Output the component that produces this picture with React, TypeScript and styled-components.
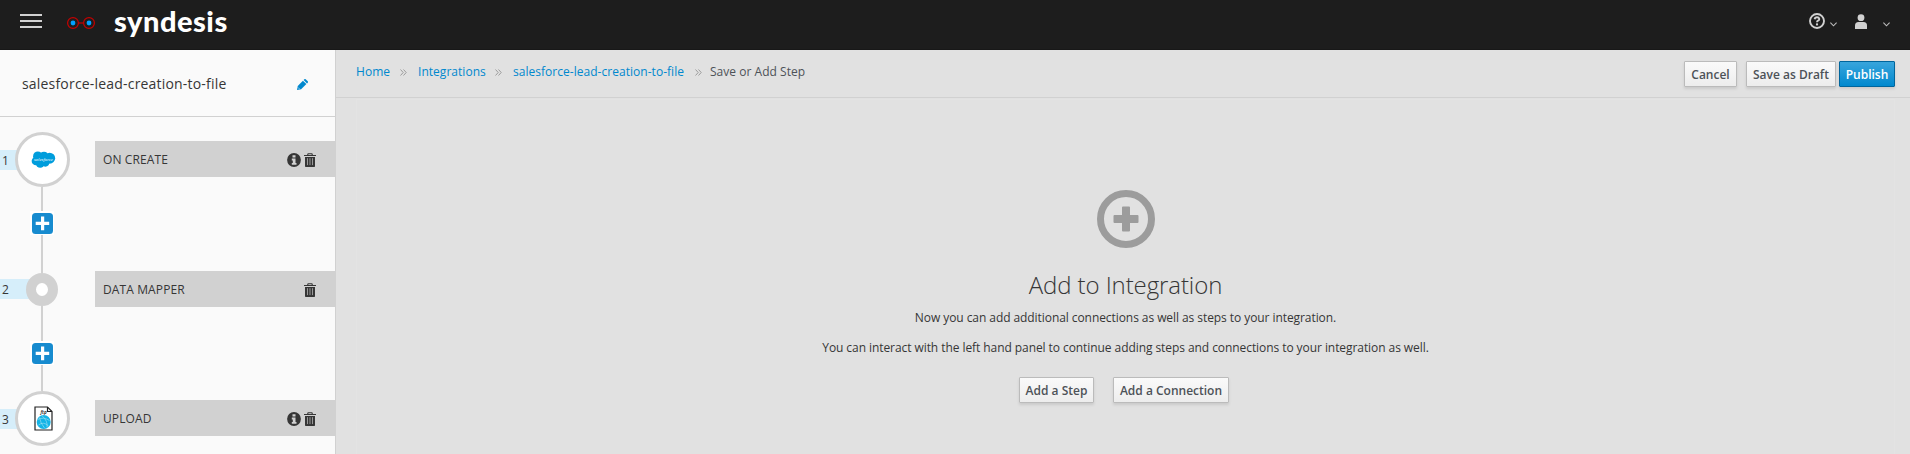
import React from "react";
import styled, { createGlobalStyle } from "styled-components";

const GlobalStyle = createGlobalStyle`
  * { box-sizing: border-box; }
  body {
    margin: 0;
    background: #e1e1e1;
    color: #363636;
    font-family: "Open Sans", "Liberation Sans", sans-serif;
    font-size: 12px;
    line-height: 20px;
    overflow: hidden;
  }
`;

const Page = styled.div`
  display: flex;
  flex-direction: column;
  height: 454px;
  overflow: hidden;
`;

const Masthead = styled.header`
  display: flex;
  align-items: flex-start;
  flex: 0 0 50px;
  background: #1d1d1d;
  border-bottom: 1px solid #181818;
`;

const MenuToggle = styled.div`
  display: flex;
  flex-direction: column;
  gap: 4px;
  margin: 14px 0 0 20px;
`;

const MenuBar = styled.span`
  width: 22px;
  height: 2px;
  background: #d1d1d1;
`;

const Glasses = styled.svg`
  margin: 16px 0 0 25px;
`;

const Brand = styled.div`
  margin: 1px 0 0 18px;
  width: 120px;
  color: #fff;
  font-family: Lato, "Open Sans", sans-serif;
  font-size: 29px;
  font-weight: 900;
  line-height: 40px;
  letter-spacing: 0.5px;
`;

const MastheadIcons = styled.div`
  display: flex;
  margin: 13px 20px 0 auto;

  svg { display: block; }
`;

const UserIcon = styled.svg`
  margin: 1px 0 0 18px;
`;

const Chevron = styled.svg<{ $gap: number }>`
  margin: 9px 0 0 ${(p) => p.$gap}px;
`;

const Body = styled.div`
  display: flex;
  flex: 1;
`;

const Sidebar = styled.aside`
  flex: 0 0 336px;
  background: #fafafa;
  border-right: 1px solid #d1d1d1;
`;

const SidebarTitle = styled.div`
  display: flex;
  align-items: center;
  justify-content: space-between;
  height: 67px;
  padding: 2px 27px 0 22px;
  border-bottom: 1px solid #d1d1d1;
  font-size: 14px;
  letter-spacing: 0.19px;
`;

const Steps = styled.div`
  padding-top: 15px;
`;

const StepRow = styled.div<{ $height: number }>`
  display: flex;
  align-items: center;
  height: ${(p) => p.$height}px;
`;

const StepRail = styled.div`
  display: flex;
  align-items: center;
  flex: 0 0 95px;
  height: 100%;
`;

const StepNumber = styled.span<{ $small?: boolean }>`
  flex: none;
  width: 36px;
  height: 20px;
  margin: ${(p) => (p.$small ? "0 0 1px" : "1px 0 0")};
  padding-left: 2px;
  background: #d6eefa;
  line-height: 21px;
`;

const StepCircle = styled.div`
  display: flex;
  align-items: center;
  justify-content: center;
  flex: none;
  width: 55px;
  height: 55px;
  margin-left: -21px;
  padding-left: 1px;
  border: 3px solid #d1d1d1;
  border-radius: 50%;
  background: #fff;
`;

const StepDot = styled.div`
  flex: none;
  width: 32px;
  height: 33px;
  margin-left: -10px;
  border: 10px solid #d1d1d1;
  border-radius: 50%;
  background: #fff;
`;

const StepCard = styled.div`
  display: flex;
  align-items: center;
  flex: 1;
  height: 36px;
  margin-bottom: 1px;
  padding: 0 19px 0 8px;
  background: #d1d1d1;
`;

const StepName = styled.span`
  flex: 1;
  padding-top: 1px;
  letter-spacing: 0.12px;
`;

const StepActions = styled.div`
  display: flex;
  align-items: center;
  gap: 3px;
  padding-top: 1px;
`;

const Connector = styled.div<{ $after: number }>`
  display: flex;
  flex-direction: column;
  align-items: center;
  width: 24px;
  margin-left: 30px;
  padding-bottom: ${(p) => p.$after}px;
  background: linear-gradient(#d1d1d1, #d1d1d1) 11px 0 / 2px 100% no-repeat;
`;

const AddButton = styled.div<{ $before: number }>`
  display: flex;
  align-items: center;
  justify-content: center;
  width: 24px;
  height: 24px;
  margin-top: ${(p) => p.$before}px;
  background: #fff;
`;

const Main = styled.main`
  flex: 1;
  display: flex;
  flex-direction: column;
`;

const Toolbar = styled.div`
  display: flex;
  height: 48px;
  padding: 11px 15px 0 20px;
  border-bottom: 1px solid #d1d1d1;
`;

const Breadcrumbs = styled.nav`
  display: flex;
  align-items: center;
  height: 20px;
  margin-top: 1px;
`;

const Crumb = styled.a<{ $width: number }>`
  width: ${(p) => p.$width}px;
  white-space: nowrap;
  color: #0088ce;
  letter-spacing: 0.03px;
`;

const CurrentCrumb = styled.span`
  color: #4d5258;
  letter-spacing: 0.03px;
`;

const Separator = styled.svg<{ $after?: number }>`
  margin: 1px ${(p) => p.$after ?? 11}px 0 10px;
`;

const Actions = styled.div`
  display: flex;
  margin-left: auto;
`;

const Button = styled.button<{ $primary?: boolean; $width: number; $gap?: number }>`
  width: ${(p) => p.$width}px;
  height: 26px;
  margin: 0 0 0 ${(p) => p.$gap ?? 0}px;
  padding: 1px 0 0;
  border: 1px solid ${(p) => (p.$primary ? "#00659c" : "#bbb")};
  border-radius: 1px;
  background: ${(p) =>
    p.$primary ? "linear-gradient(#39a5dc, #0088ce)" : "linear-gradient(#fafafa, #ededed)"};
  box-shadow: 0 2px 3px rgba(3, 3, 3, 0.1);
  color: ${(p) => (p.$primary ? "#fff" : "#4d5258")};
  font: 600 12px/20px "Open Sans", sans-serif;
  white-space: nowrap;
`;

const EmptyState = styled.section`
  display: flex;
  flex-direction: column;
  align-items: center;
  flex: 1;
  margin: 1px 15px 0 20px;
  padding-top: 90px;
  border: 1px solid #e3e3e3;
  border-bottom: 0;
`;

const Heading = styled.h1`
  margin: 21px 0 0;
  font-size: 24px;
  font-weight: 300;
  line-height: 32px;
  letter-spacing: -0.1px;
`;

const Paragraph = styled.p`
  margin: 7px 0 3px;
  letter-spacing: -0.07px;
`;

const ButtonRow = styled.div`
  display: flex;
  margin: 16px 3px 0 0;
`;

const InfoIcon = () => (
  <svg width="14" height="14" viewBox="0 0 14 14">
    <circle cx="7" cy="7" r="6.9" fill="#363636" />
    <path d="M5.5 2.2h3v2.2h-3zM4.8 5.6h3.7v4.3h1v1.8H4.8V9.900h1V7.400h-1z" fill="#d1d1d1" />
  </svg>
);

const TrashIcon = () => (
  <svg width="12" height="14" viewBox="0 0 12 14" fill="none" stroke="#363636">
    <path d="M0 2.500h12" />
    <path d="M3.500 2.500l.6-1.800h3.800l.6 1.800" strokeWidth="1.100" />
    <path d="M1 4h10v9.300q0 .700-.700 .700H1.700Q1 14 1 13.300z" fill="#363636" stroke="none" />
    <path d="M3.500 5.200v6.900M6 5.200v6.900M8.500 5.200v6.900" stroke="#a5a5a5" strokeWidth=".9" />
  </svg>
);

const PlusSquare = () => (
  <svg width="21" height="21" viewBox="0 0 21 21">
    <rect width="21" height="21" rx="3.500" fill="#178bcf" />
    <path d="M9 3.500h3.200v5.300h5v3.300h-5v5.200H9v-5.200H3.700V8.800H9z" fill="#fff" />
  </svg>
);

const PencilIcon = () => (
  <svg width="11" height="11" viewBox="0 0 12 12" fill="#0088ce">
    <path d="M.8 7.500L6.500 1.800l3.700 3.700-5.700 5.700L0 12z" />
    <path d="M7.200 1.100L8 .3q.8-.6 1.500 0l2.200 2.200q.6.700 0 1.500l-.8.8z" />
    <path d="M1.200 9.300l1.500 1.500" stroke="#fafafa" strokeWidth=".7" />
  </svg>
);

const SalesforceIcon = () => (
  <svg width="25" height="18" viewBox="0 0 26 19">
    <g fill="#009ddc">
      <circle cx="7" cy="5.500" r="5" />
      <circle cx="13.500" cy="5.200" r="4.300" />
      <circle cx="19.500" cy="7.600" r="5.800" />
      <circle cx="5" cy="10.500" r="4.500" />
      <circle cx="9.500" cy="13" r="4.700" />
      <circle cx="15" cy="12.500" r="4" />
    </g>
    <text x="13" y="10.300" fill="#fff" fontFamily="Open Sans, sans-serif" fontSize="4.600" fontStyle="italic" textAnchor="middle" textLength="20" lengthAdjust="spacingAndGlyphs">
      salesforce
    </text>
  </svg>
);

const FtpIcon = () => (
  <svg width="19" height="25" viewBox="0 0 19 25">
    <path d="M1 1h12.500L18 5.500V24H1z" fill="#fff" stroke="#222" strokeWidth="1.200" />
    <path d="M13.500 1v4.500H18" fill="none" stroke="#222" strokeWidth="1.200" />
    <text x="9.500" y="7.500" fontFamily="Open Sans, sans-serif" fontSize="4.500" fontWeight="700" fontStyle="italic" textAnchor="middle" fill="#333">
      ftp
    </text>
    <circle cx="9.700" cy="16" r="7" fill="#14b4e6" />
    <path d="M3.500 13.500q6-3 12 1M4.500 19q5-4 10 1M8 9.800q6 5 5 11.500M5.500 11.500q1 6 5 10.500" fill="none" stroke="#a5e0f3" strokeWidth=".6" />
  </svg>
);

const DoubleAngle = ({ after }: { after?: number }) => (
  <Separator $after={after} width="7" height="7" viewBox="0 0 7 7" fill="none" stroke="#9c9c9c">
    <path d="M.5.5l2.700 3-2.700 3M3.500.5l2.700 3-2.700 3" />
  </Separator>
);

const DownChevron = ({ gap }: { gap: number }) => (
  <Chevron $gap={gap} width="7" height="5" viewBox="0 0 7 5" fill="none" stroke="#bdbdbd" strokeWidth="1.100">
    <path d="M.4.7l3.100 3.100L6.600.7" />
  </Chevron>
);

interface StepProps {
  index: number;
  name: string;
  icon?: React.ReactNode;
}

const Step = ({ index, name, icon }: StepProps) => (
  <StepRow $height={icon ? 55 : 33}>
    <StepRail>
      <StepNumber $small={!icon}>{index}</StepNumber>
      {icon ? <StepCircle>{icon}</StepCircle> : <StepDot />}
    </StepRail>
    <StepCard>
      <StepName>{name}</StepName>
      <StepActions>
        {icon && <InfoIcon />}
        <TrashIcon />
      </StepActions>
    </StepCard>
  </StepRow>
);

const AddBetween = ({ before, after }: { before: number; after: number }) => (
  <Connector $after={after}>
    <AddButton $before={before}>
      <PlusSquare />
    </AddButton>
  </Connector>
);

export default function App() {
  return (
    <Page>
      <GlobalStyle />
      <Masthead>
        <MenuToggle>
          <MenuBar />
          <MenuBar />
          <MenuBar />
        </MenuToggle>
        <Glasses width="29" height="14" viewBox="0 0 29 14">
          <g fill="none" stroke="#c80000" strokeWidth="1.200">
            <circle cx="6" cy="7" r="5.400" />
            <circle cx="22" cy="7" r="5.400" />
            <path d="M11.400 7h5.200" />
          </g>
          <circle cx="6" cy="7" r="2.400" fill="#00a0ff" />
          <circle cx="22" cy="7" r="2.400" fill="#00a0ff" />
        </Glasses>
        <Brand>syndesis</Brand>
        <MastheadIcons>
          <svg width="16" height="16" viewBox="0 0 16 16" fill="none" stroke="#d1d1d1">
            <circle cx="8" cy="8" r="7" strokeWidth="1.900" />
            <path d="M5.600 6.200Q6 4.300 8 4.300t2.300 1.600Q10.300 7 9 7.700 8 8.200 8 9.300" strokeWidth="1.900" />
            <path d="M8 10.400v2" strokeWidth="2.100" />
          </svg>
          <DownChevron gap={5} />
          <UserIcon width="12" height="15" viewBox="0 0 12 15" fill="#d1d1d1">
            <circle cx="6" cy="3.700" r="3.400" />
            <path d="M0 15v-3.500Q0 8 3.500 8h5Q12 8 12 11.500V15z" />
          </UserIcon>
          <DownChevron gap={16} />
        </MastheadIcons>
      </Masthead>
      <Body>
        <Sidebar>
          <SidebarTitle>
            salesforce-lead-creation-to-file
            <PencilIcon />
          </SidebarTitle>
          <Steps>
            <Step index={1} name="ON CREATE" icon={<SalesforceIcon />} />
            <AddBetween before={24} after={38} />
            <Step index={2} name="DATA MAPPER" />
            <AddBetween before={35} after={26} />
            <Step index={3} name="UPLOAD" icon={<FtpIcon />} />
          </Steps>
        </Sidebar>
        <Main>
          <Toolbar>
            <Breadcrumbs>
              <Crumb $width={34}>Home</Crumb>
              <DoubleAngle />
              <Crumb $width={67}>Integrations</Crumb>
              <DoubleAngle />
              <Crumb $width={172}>salesforce-lead-creation-to-file</Crumb>
              <DoubleAngle after={8} />
              <CurrentCrumb>Save or Add Step</CurrentCrumb>
            </Breadcrumbs>
            <Actions>
              <Button $width={53}>Cancel</Button>
              <Button $width={90} $gap={9}>Save as Draft</Button>
              <Button $width={56} $gap={3} $primary>Publish</Button>
            </Actions>
          </Toolbar>
          <EmptyState>
            <svg width="58" height="58" viewBox="0 0 58 58">
              <circle cx="29" cy="29" r="25.500" fill="none" stroke="#9c9c9c" strokeWidth="7" />
              <path d="M26 16.500h6q1 0 1 1V25h7.500q1 0 1 1v6q0 1-1 1H33v7.500q0 1-1 1h-6q-1 0-1-1V33h-7.500q-1 0-1-1v-6q0-1 1-1H25v-7.500q0-1 1-1z" fill="#9c9c9c" />
            </svg>
            <Heading>Add to Integration</Heading>
            <Paragraph>Now you can add additional connections as well as steps to your integration.</Paragraph>
            <Paragraph>
              You can interact with the left hand panel to continue adding steps and connections to your integration as well.
            </Paragraph>
            <ButtonRow>
              <Button $width={75}>Add a Step</Button>
              <Button $width={116} $gap={19}>Add a Connection</Button>
            </ButtonRow>
          </EmptyState>
        </Main>
      </Body>
    </Page>
  );
}
